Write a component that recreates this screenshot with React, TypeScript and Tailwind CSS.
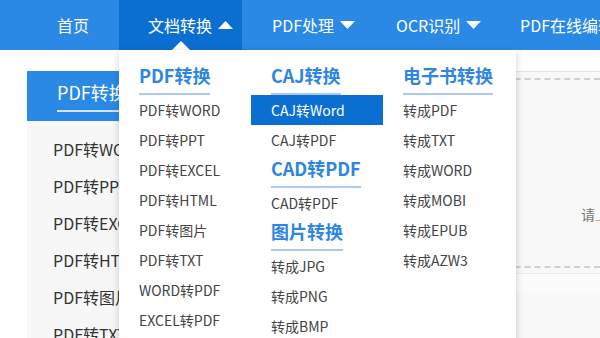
import React from 'react';

const font = { fontFamily: '"Noto Sans CJK SC", "Noto Sans", sans-serif' };

const navItems = [
  { label: '首页', arrow: false },
  { label: '文档转换', arrow: true, active: true },
  { label: 'PDF处理', arrow: true },
  { label: 'OCR识别', arrow: true },
  { label: 'PDF在线编辑', arrow: true },
];

const sideItems = ['PDF转WORD', 'PDF转PPT', 'PDF转EXCEL', 'PDF转HTML', 'PDF转图片', 'PDF转TXT', 'WORD转PDF'];

type Group = { title: string; items: string[] };

const columns: Group[][] = [
  [{ title: 'PDF转换', items: ['PDF转WORD', 'PDF转PPT', 'PDF转EXCEL', 'PDF转HTML', 'PDF转图片', 'PDF转TXT', 'WORD转PDF', 'EXCEL转PDF'] }],
  [
    { title: 'CAJ转换', items: ['CAJ转Word', 'CAJ转PDF'] },
    { title: 'CAD转PDF', items: ['CAD转PDF'] },
    { title: '图片转换', items: ['转成JPG', '转成PNG', '转成BMP'] },
  ],
  [{ title: '电子书转换', items: ['转成PDF', '转成TXT', '转成WORD', '转成MOBI', '转成EPUB', '转成AZW3'] }],
];

function Caret({ up }: { up?: boolean }) {
  return (
    <svg width="15" height="8" viewBox="0 0 15 8" className="shrink-0">
      {up ? <polygon points="0,8 15,8 7.5,0" fill="#fff" /> : <polygon points="0,0 15,0 7.5,8" fill="#fff" />}
    </svg>
  );
}

function Dropdown() {
  return (
    <div className="absolute left-[119px] top-[50px] w-[397px] h-[300px] bg-white shadow-[0_2px_8px_rgba(0,0,0,0.18)] pt-[12px] flex">
      {columns.map((col, ci) => (
        <div key={ci} className="w-[132px] flex flex-col">
          {col.map((g) => (
            <div key={g.title} className="flex flex-col">
              <div className="px-[20px] h-[33px]">
                <span className="inline-block text-[18px] font-bold leading-[26px] pb-[5px] border-b-2 border-[#a9c9f0] text-[#2e86e2]">
                  {g.title}
                </span>
              </div>
              {g.items.map((it) => (
                <div
                  key={it}
                  className={
                    it === 'CAJ转Word'
                      ? 'h-[30px] px-[20px] flex items-center text-[14px] bg-[#0b6fd1] text-white'
                      : 'h-[30px] px-[20px] flex items-center text-[14px] text-[#444]'
                  }
                >
                  {it}
                </div>
              ))}
            </div>
          ))}
        </div>
      ))}
    </div>
  );
}

export default function App() {
  return (
    <div className="relative w-[600px] h-[338px] overflow-hidden bg-white" style={font}>
      {/* top nav */}
      <div className="h-[50px] bg-[#2b89e6] flex pl-[27px] whitespace-nowrap">
        {navItems.map((n) => (
          <div
            key={n.label}
            className={
              n.active
                ? 'relative h-full w-[123px] shrink-0 pl-[29px] flex items-center gap-[6px] bg-[#0b6fd1] text-white text-[16px]'
                : n.arrow
                ? 'relative h-full w-[124px] shrink-0 pl-[30px] flex items-center gap-[6px] text-white text-[16px]'
                : 'relative h-full shrink-0 px-[30px] flex items-center text-white text-[16px]'
            }
          >
            <span>{n.label}</span>
            {n.arrow && <Caret up={n.active} />}
            {n.active && (
              <span className="absolute bottom-0 left-[53px] w-0 h-0 border-l-[9px] border-r-[9px] border-b-[9px] border-l-transparent border-r-transparent border-b-white" />
            )}
          </div>
        ))}
      </div>

      {/* page body */}
      <div className="flex gap-[20px] pl-[27px] pt-[21px]">
        <div className="w-[200px] shrink-0">
          <div className="h-[50px] bg-[#2b89e6] pl-[30px] pt-[7px]">
            <span className="inline-block text-[18px] text-white leading-[28px] pb-[4px] border-b-2 border-[#cfe3fa] pr-[30px]">
              PDF转换
            </span>
          </div>
          <div className="bg-[#f7f7f7] pt-[9px] h-[260px]">
            {sideItems.map((s) => (
              <div key={s} className="h-[37px] pl-[26px] flex items-center text-[16px] text-[#333]">
                {s}
              </div>
            ))}
          </div>
        </div>

        <div className="flex-1 min-w-0">
          <div className="border-t border-[#e4e4e4] bg-[#f8f8f8] pt-[6px] h-[300px]">
            <div className="h-[190px] border-t-2 border-b-2 border-dashed border-[#d0d0d0] flex flex-col justify-end pb-[41px] pl-[334px]">
              <span className="text-[14px] text-[#777] whitespace-nowrap">
                请<span className="text-[#f0a050]">上传文件</span>
              </span>
            </div>
            <div className="mt-[5px] border-t border-[#ececec] h-[20px] bg-[#fbfbfb]" />
          </div>
        </div>
      </div>

      <Dropdown />
    </div>
  );
}
